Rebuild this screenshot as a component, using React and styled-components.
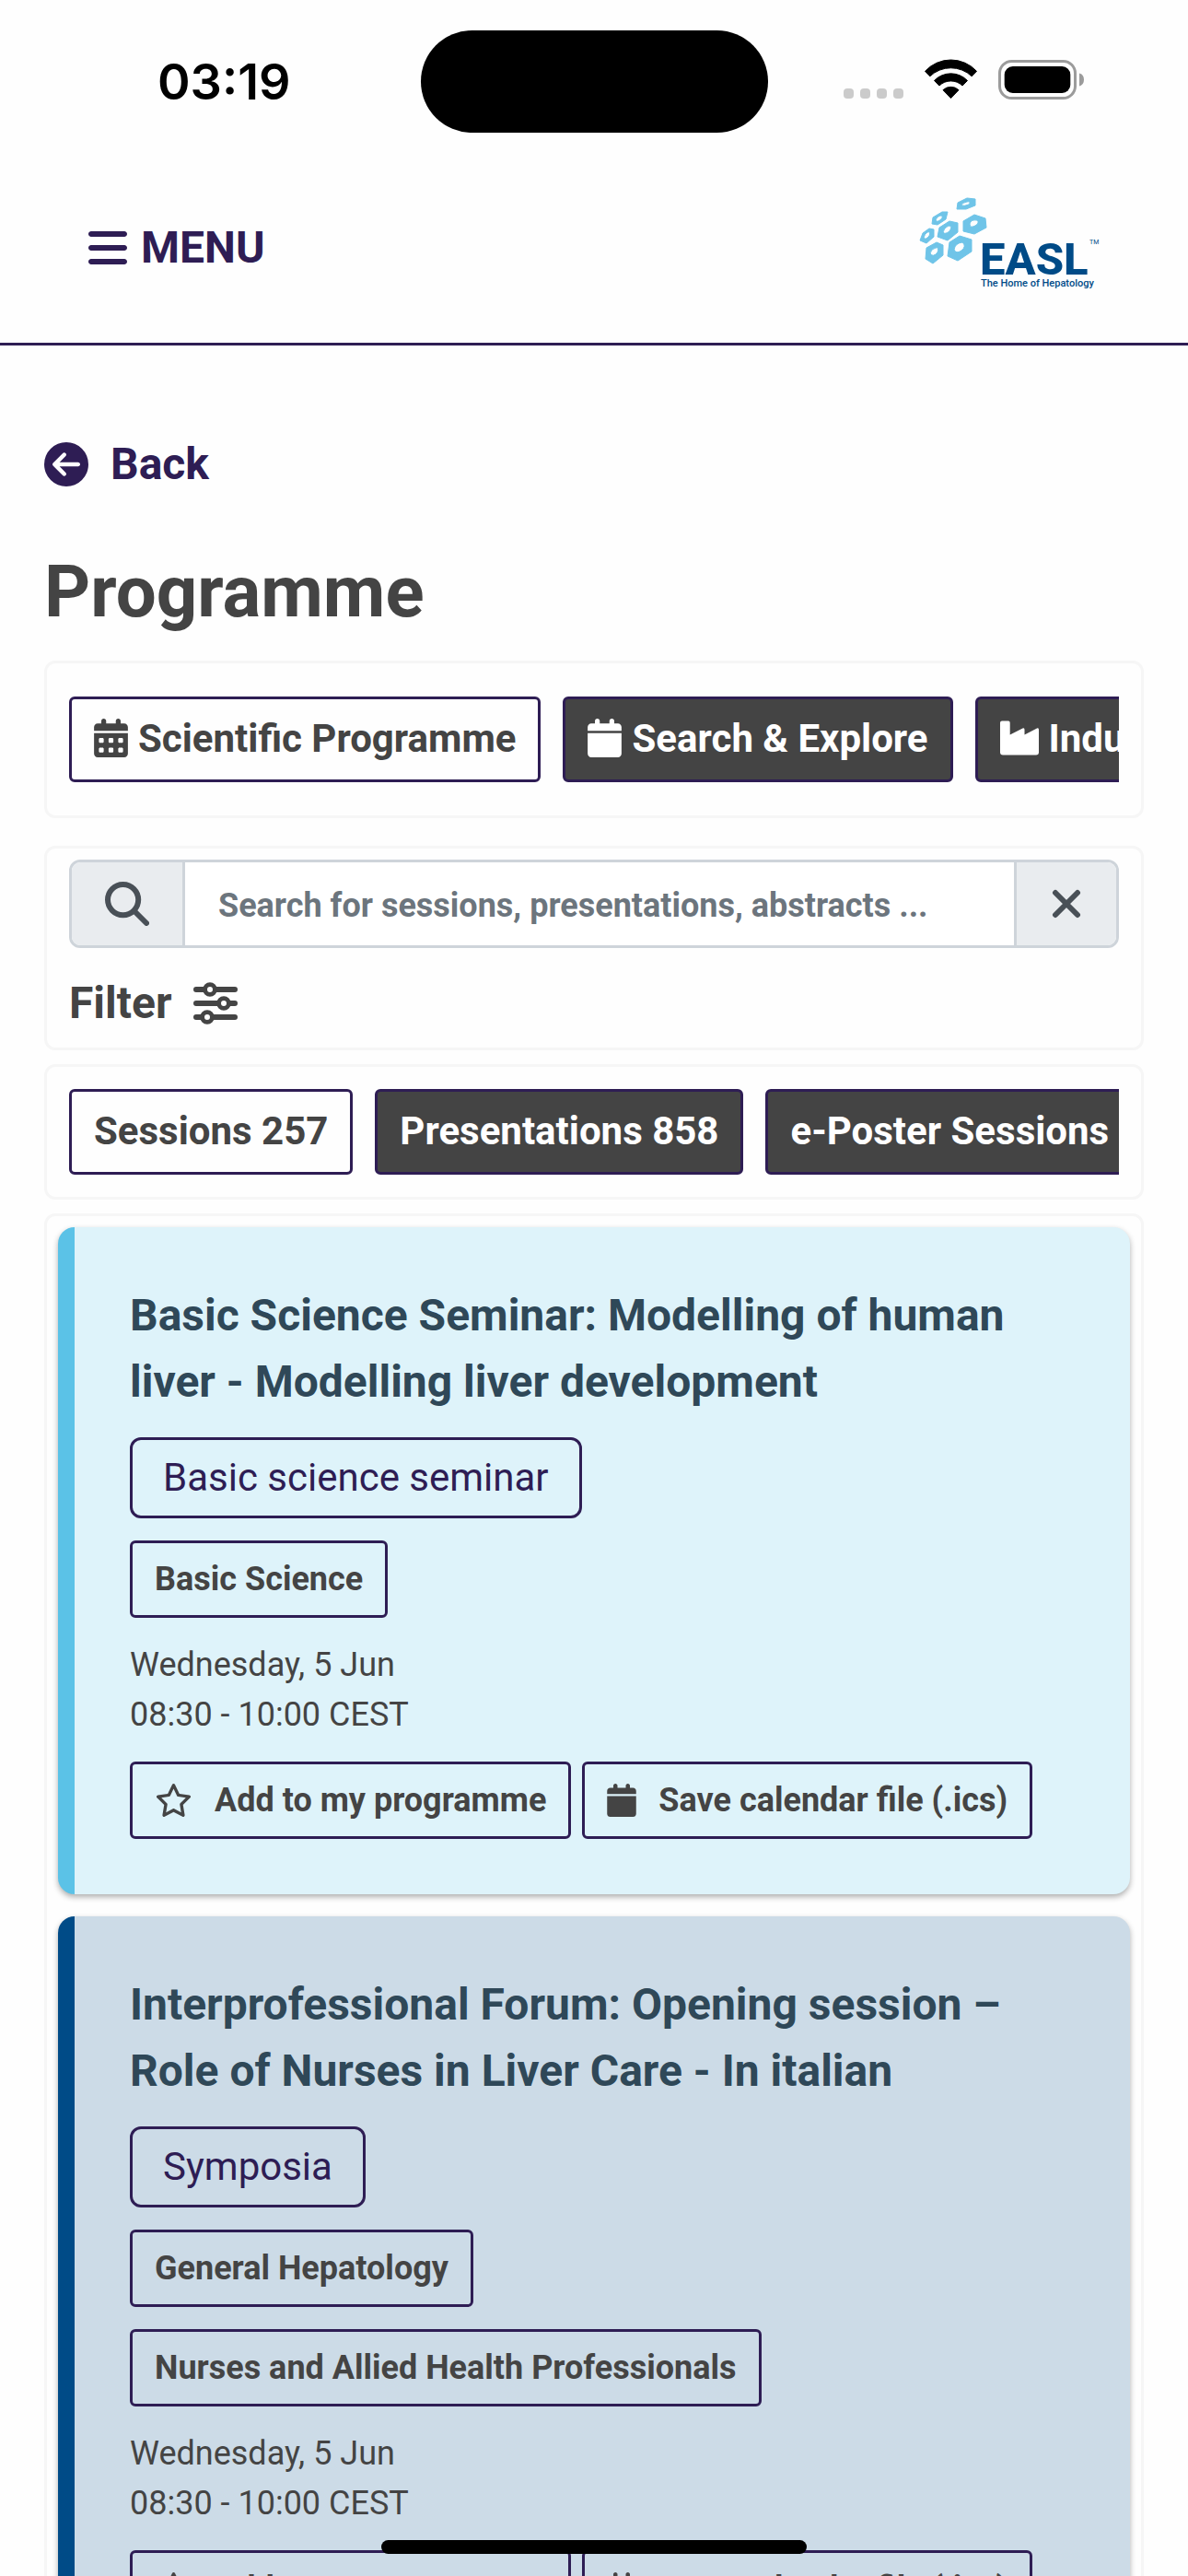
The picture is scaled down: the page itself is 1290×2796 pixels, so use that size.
import styled, { createGlobalStyle } from "styled-components";
import {
  FaBars,
  FaCalendar,
  FaCalendarDays,
  FaCircleArrowLeft,
  FaRegStar,
} from "react-icons/fa6";

const PURPLE = "#2e1d54";
const GREY = "#444444";

const GlobalStyle = createGlobalStyle`
  *, *::before, *::after {
    box-sizing: border-box;
  }

  body {
    margin: 0;
    background: #fefefe;
    color: ${GREY};
    font-family: Roboto, "Liberation Sans", sans-serif;
  }

  button, input {
    font-family: inherit;
  }
`;

const Screen = styled.div`
  height: 100vh;
  overflow: hidden;
`;

const StatusBar = styled.div`
  display: grid;
  grid-template-columns: 1fr auto 1fr;
  height: 177px;
  padding: 33px 113px 0 171px;
  color: #000;
`;

const Clock = styled.time`
  font: 600 54px/111px Inter, sans-serif;
`;

const Island = styled.div`
  width: 377px;
  height: 111px;
  margin-right: 58px;
  border-radius: 56px;
  background: #000;
`;

const StatusIcons = styled.svg`
  justify-self: end;
  width: 262px;
  height: 45px;
  margin-top: 31px;
`;

const Header = styled.header`
  display: flex;
  align-items: center;
  justify-content: space-between;
  height: 198px;
  padding: 0 96px 12px;
  border-bottom: 3px solid ${PURPLE};
`;

const MenuButton = styled.button`
  display: flex;
  align-items: center;
  gap: 15px;
  padding: 0;
  border: 0;
  background: none;
  color: ${PURPLE};
  font-size: 48px;
  font-weight: 700;
  line-height: 72px;

  svg {
    width: 42px;
  }
`;

const Logo = styled.svg`
  width: 196px;
  height: 110px;
`;

const Page = styled.main`
  padding: 93px 48px 0;
`;

const BackLink = styled.a`
  display: inline-flex;
  align-items: center;
  gap: 24px;
  color: ${PURPLE};
  font-size: 48px;
  font-weight: 700;
  line-height: 72px;
  text-decoration: none;
`;

const Title = styled.h1`
  margin: 55px 0 26px;
  font-size: 78px;
  font-weight: 700;
  line-height: 96px;
`;

const Panel = styled.section`
  margin-bottom: ${({ $gap = 15 }) => $gap}px;
  padding: ${({ $pad }) => $pad};
  border: 3px solid #f6f6f6;
  border-radius: 12px;
`;

const TabStrip = styled.nav`
  display: flex;
  gap: 24px;
  overflow: hidden;
`;

const Tab = styled.button`
  display: flex;
  flex-shrink: 0;
  align-items: center;
  gap: 11px;
  height: 93px;
  padding: 0 24px 3px;
  border: 3px solid ${PURPLE};
  border-radius: 6px;
  background: ${({ $active }) => ($active ? "#fefefe" : GREY)};
  color: ${({ $active }) => ($active ? GREY : "#fff")};
  font-size: 42px;
  font-weight: 700;
  white-space: nowrap;

  svg {
    width: ${({ $iconWidth = 37 }) => $iconWidth}px;
    height: 42px;
  }
`;

const SearchGroup = styled.div`
  display: flex;
  height: 96px;
  overflow: hidden;
  border: 3px solid #ced4da;
  border-radius: 12px;
`;

const SearchLabel = styled.label`
  display: flex;
  align-items: center;
  justify-content: center;
  width: 123px;
  border-right: 3px solid #ced4da;
  background: #e9ecef;
  color: #495057;
`;

const SearchInput = styled.input`
  flex: 1;
  min-width: 0;
  padding: 3px 36px 0;
  border: 0;
  background: #fff;
  color: ${GREY};
  font-size: 36px;
  font-weight: 700;

  &::placeholder {
    color: #6c757d;
    opacity: 1;
  }
`;

const ClearButton = styled.button`
  display: flex;
  align-items: center;
  justify-content: center;
  width: 111px;
  padding: 0;
  border: 0;
  border-left: 3px solid #ced4da;
  background: #e9ecef;
  color: #495057;
`;

const FilterButton = styled.button`
  display: flex;
  align-items: center;
  gap: 23px;
  margin-top: 24px;
  padding: 0;
  border: 0;
  background: none;
  color: ${GREY};
  font-size: 48px;
  font-weight: 700;
  line-height: 72px;
`;

const SessionList = styled.div`
  display: flex;
  flex-direction: column;
  gap: 24px;
`;

const SessionCard = styled.article`
  display: flex;
  flex-direction: column;
  align-items: flex-start;
  gap: 24px;
  padding: 60px;
  border-left: 18px solid ${({ $accent }) => $accent};
  border-radius: 18px;
  background: ${({ $tint }) => $tint};
  box-shadow: 0 3px 6px rgba(0, 0, 0, 0.32);
`;

const SessionTitle = styled.h2`
  margin: 0;
  color: #2f4858;
  font-size: 48px;
  font-weight: 700;
  line-height: 72px;
`;

const TypeBadge = styled.span`
  padding: 9px 33px;
  border: 3px solid ${PURPLE};
  border-radius: 12px;
  color: ${PURPLE};
  font-size: 42px;
  line-height: 64px;
`;

const TopicBadge = styled.span`
  padding: 12px 24px;
  border: 3px solid ${PURPLE};
  border-radius: 6px;
  font-size: 36px;
  font-weight: 700;
  line-height: 54px;
`;

const When = styled.div`
  font-size: 36px;
  line-height: 54px;
`;

const Actions = styled.div`
  display: flex;
  gap: 12px;
`;

const ActionButton = styled.button`
  display: flex;
  align-items: center;
  gap: 24px;
  height: 84px;
  padding: 0 24px;
  border: 3px solid ${PURPLE};
  border-radius: 6px;
  background: transparent;
  color: ${GREY};
  font-size: 36px;
  font-weight: 700;
  white-space: nowrap;

  svg {
    width: ${({ $iconWidth }) => $iconWidth}px;
    height: 36px;
  }
`;

const HomeIndicator = styled.div`
  position: fixed;
  bottom: 24px;
  left: 50%;
  width: 462px;
  height: 15px;
  margin-left: -231px;
  border-radius: 8px;
  background: #000;
`;

const sessions = [
  {
    title:
      "Basic Science Seminar: Modelling of human liver - Modelling liver development",
    type: "Basic science seminar",
    topics: ["Basic Science"],
    accent: "#5bc2e7",
    tint: "#def3fa",
  },
  {
    title:
      "Interprofessional Forum: Opening session – Role of Nurses in Liver Care - In italian",
    type: "Symposia",
    topics: ["General Hepatology", "Nurses and Allied Health Professionals"],
    accent: "#004b87",
    tint: "#ccdbe7",
  },
];

const EaslLogo = () => (
  <Logo viewBox="0 0 196 110" role="img" aria-label="EASL">
    <g
      fill="#6fc4e8"
      fillRule="evenodd"
      stroke="#6fc4e8"
      strokeWidth="1"
      strokeLinejoin="round"
    >
      <path d="M42 6 52 1 61 2 61 9 51 13 41 13ZM46 9Q49 10 54 8Q57 4 52 5Q46 6 46 9Z" />
      <path d="M15 22 25 16 31 16 29 24 20 30 14 29ZM18 25Q19 28 24 24Q27 20 23 20Q19 21 18 25Z" />
      <path d="M48 26 60 19 72 23 73 33 60 40 48 37ZM55 29Q55 34 61 31Q66 28 63 25Q56 24 55 29Z" />
      <path d="M22 33 33 26 42 28 42 38 31 47 20 43ZM26 38Q28 41 33 37Q37 31 32 31Q27 33 26 38Z" />
      <path d="M4 39 11 34 16 35 16 43 8 50 1 47ZM5 44Q7 47 11 42Q13 37 9 38Q6 40 5 44Z" />
      <path d="M33 49 44 42 57 46 57 59 42 69 31 64ZM38 57Q40 62 46 58Q52 53 47 49Q39 50 38 57Z" />
      <path d="M8 55 19 49 26 52 26 63 15 72 7 67ZM12 61Q15 66 20 60Q22 54 18 55Q13 56 12 61Z" />
    </g>
    <g fill="#004b87" fontFamily="Roboto, sans-serif">
      <text x="66" y="84" fontSize="49" fontWeight="800">
        EASL
      </text>
      <text x="67" y="97" fontSize="11" fontWeight="500">
        The Home of Hepatology
      </text>
      <text x="185" y="51" fontSize="7">
        TM
      </text>
    </g>
  </Logo>
);

const IndustryIcon = () => (
  <svg viewBox="0 0 42 42" fill="currentColor" aria-hidden="true">
    <path d="M2 2.500H9Q10.700 2.500 10.700 4.500V17.500L24.500 10.500Q26.500 9.800 26.500 12V17.500L40 10.500Q42 9.800 42 12V36.500Q42 39.500 39 39.500H3Q0 39.500 0 36.500V4.500Q0 2.500 2 2.500Z" />
  </svg>
);

const SearchIcon = () => (
  <svg
    width="48"
    height="48"
    viewBox="0 0 48 48"
    fill="none"
    stroke="currentColor"
    strokeWidth="6"
    strokeLinecap="round"
    aria-hidden="true"
  >
    <circle cx="19.600" cy="19.600" r="16.600" />
    <path d="m32 32 13 13" />
  </svg>
);

const CloseIcon = () => (
  <svg
    width="32"
    height="32"
    viewBox="0 0 32 32"
    stroke="currentColor"
    strokeWidth="6"
    strokeLinecap="round"
    aria-hidden="true"
  >
    <path d="M4 4 28 28M28 4 4 28" />
  </svg>
);

const SlidersIcon = () => (
  <svg
    width="48"
    height="48"
    viewBox="0 0 48 48"
    fill="none"
    stroke="currentColor"
    strokeWidth="6"
    strokeLinecap="round"
    aria-hidden="true"
  >
    <path d="M3 9H12M24 9H45M3 24H27M39 24H45M3 39H9M21 39H45" />
    <g strokeWidth="4.800">
      <circle cx="18" cy="9" r="5.400" />
      <circle cx="33" cy="24" r="5.400" />
      <circle cx="15" cy="39" r="5.400" />
    </g>
  </svg>
);

const Session = ({ title, type, topics, accent, tint }) => (
  <SessionCard $accent={accent} $tint={tint}>
    <SessionTitle>{title}</SessionTitle>
    <TypeBadge>{type}</TypeBadge>
    {topics.map((topic) => (
      <TopicBadge key={topic}>{topic}</TopicBadge>
    ))}
    <When>
      Wednesday, 5 Jun
      <br />
      08:30 - 10:00 CEST
    </When>
    <Actions>
      <ActionButton type="button" $iconWidth={41}>
        <FaRegStar />
        Add to my programme
      </ActionButton>
      <ActionButton type="button" $iconWidth={32}>
        <FaCalendar />
        Save calendar file (.ics)
      </ActionButton>
    </Actions>
  </SessionCard>
);

const App = () => (
  <Screen>
    <GlobalStyle />

    <StatusBar>
      <Clock>03:19</Clock>
      <Island />
      <StatusIcons viewBox="0 0 262 45" aria-hidden="true">
        <g fill="#cbcbcb">
          <rect x="1" y="32" width="11" height="11" rx="4" />
          <rect x="19" y="32" width="11" height="11" rx="4" />
          <rect x="37" y="32" width="11" height="11" rx="4" />
          <rect x="55" y="32" width="11" height="11" rx="4" />
        </g>
        {/* Wifi */}
        <g stroke="#000" strokeWidth="1" strokeLinejoin="round">
          <path d="M89.500 13.300A38 38 0 0 1 145.500 13.300L140.200 18.800A33 33 0 0 0 94.800 18.800Z" />
          <path d="M99.500 23.500A25 25 0 0 1 135.500 23.500L130 29A18 18 0 0 0 105 29Z" />
          <path d="M109 33.700A12.500 12.500 0 0 1 126 33.700L117.500 42.500Z" />
        </g>
        {/* Battery */}
        <rect x="170.500" y="2.500" width="82" height="40" rx="13" fill="none" stroke="#9b9b9b" strokeWidth="3" />
        <rect x="175.700" y="8" width="71.600" height="29" rx="9" />
        <path d="M257 15.500q5 1.500 5 7t-5 7Z" fill="#9b9b9b" />
      </StatusIcons>
    </StatusBar>

    <Header>
      <MenuButton type="button">
        <FaBars size={48} />
        MENU
      </MenuButton>
      <EaslLogo />
    </Header>

    <Page>
      <BackLink href="#back">
        <FaCircleArrowLeft />
        Back
      </BackLink>
      <Title>Programme</Title>

      <Panel $pad="36px 24px" $gap={30}>
        <TabStrip aria-label="Programme sections">
          <Tab type="button" $active>
            <FaCalendarDays />
            Scientific Programme
          </Tab>
          <Tab type="button">
            <FaCalendar />
            Search & Explore
          </Tab>
          <Tab type="button" $iconWidth={42}>
            <IndustryIcon />
            Industry
          </Tab>
        </TabStrip>
      </Panel>

      <Panel $pad="12px 24px">
        <SearchGroup>
          <SearchLabel htmlFor="search" aria-label="Search">
            <SearchIcon />
          </SearchLabel>
          <SearchInput
            id="search"
            type="text"
            placeholder="Search for sessions, presentations, abstracts ..."
          />
          <ClearButton type="button" aria-label="Clear search">
            <CloseIcon />
          </ClearButton>
        </SearchGroup>
        <FilterButton type="button">
          Filter
          <SlidersIcon />
        </FilterButton>
      </Panel>

      <Panel $pad="24px">
        <TabStrip aria-label="Results">
          <Tab type="button" $active>
            Sessions 257
          </Tab>
          <Tab type="button">Presentations 858</Tab>
          <Tab type="button">e-Poster Sessions</Tab>
        </TabStrip>
      </Panel>

      <Panel $pad="12px">
        <SessionList>
          {sessions.map((session) => (
            <Session key={session.title} {...session} />
          ))}
        </SessionList>
      </Panel>
    </Page>

    <HomeIndicator />
  </Screen>
);

export default App;
